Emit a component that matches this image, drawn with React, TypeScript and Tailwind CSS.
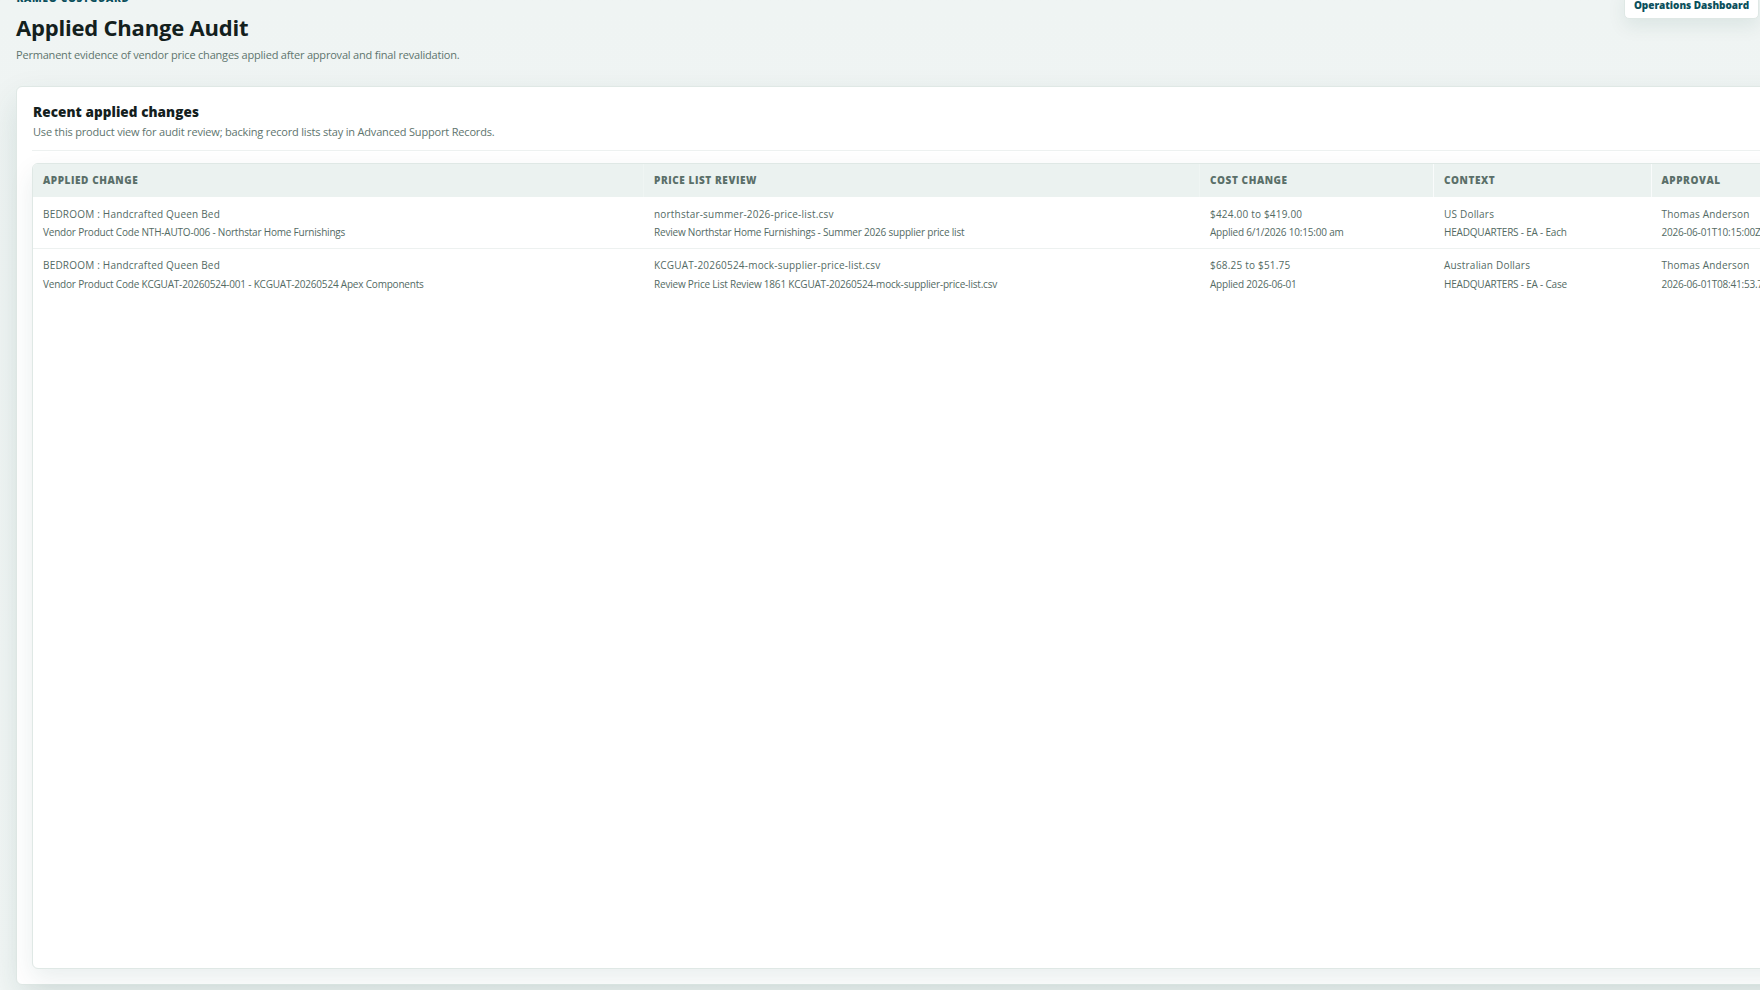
import clsx from 'clsx'

type Row = { cells: [string, string][] }

const COLUMNS = ['Applied Change', 'Price List Review', 'Cost Change', 'Context', 'Approval']

const ROWS: Row[] = [
  {
    cells: [
      ['BEDROOM : Handcrafted Queen Bed', 'Vendor Product Code NTH-AUTO-006 - Northstar Home Furnishings'],
      ['northstar-summer-2026-price-list.csv', 'Review Northstar Home Furnishings - Summer 2026 supplier price list'],
      ['$424.00 to $419.00', 'Applied 6/1/2026 10:15:00 am'],
      ['US Dollars', 'HEADQUARTERS - EA - Each'],
      ['Thomas Anderson', '2026-06-01T10:15:00Z'],
    ],
  },
  {
    cells: [
      ['BEDROOM : Handcrafted Queen Bed', 'Vendor Product Code KCGUAT-20260524-001 - KCGUAT-20260524 Apex Components'],
      ['KCGUAT-20260524-mock-supplier-price-list.csv', 'Review Price List Review 1861 KCGUAT-20260524-mock-supplier-price-list.csv'],
      ['$68.25 to $51.75', 'Applied 2026-06-01'],
      ['Australian Dollars', 'HEADQUARTERS - EA - Case'],
      ['Thomas Anderson', '2026-06-01T08:41:53.7'],
    ],
  },
]

const GRID = 'grid grid-cols-[611px_556px_234px_217.5px_240px]'

export default function App() {
  return (
    <div className="h-[990px] w-[1760px] overflow-hidden bg-linear-to-b from-[#eff4f3] to-[#f3f7f6] pl-[16px] font-['Open_Sans','Noto_Sans',sans-serif]">
      <header className="flex h-[86px] items-start justify-between">
        <div>
          <p className="-mt-[8px] h-[12px] pl-[0.5px] text-[10px] leading-[12px] font-extrabold tracking-[0.72px] text-[#0b4f5c] uppercase">Kameo CostGuard</p>
          <h1 className="mt-[7px] text-[22px] leading-[32px] font-bold tracking-[-0.2px] text-[#13201d]">Applied Change Audit</h1>
          <p className="mt-[4px] text-[11px] leading-[16px] tracking-[-0.2px] text-[#5e746e]">Permanent evidence of vendor price changes applied after approval and final revalidation.</p>
        </div>
        <button className="-mt-[13px] mr-[1px] h-[32px] w-[135px] rounded-[5px] border border-[#dfe8e5] bg-white pt-[5px] text-[10px] font-extrabold tracking-[-0.03px] whitespace-nowrap text-[#0b4f5c] shadow-[0_8px_18px_rgba(16,72,62,0.08)]">
          Operations Dashboard
        </button>
      </header>

      <section className="h-[899px] w-[1800px] rounded-[6px] border border-[#dfe8e5] bg-white px-[15px] pt-[15px] shadow-[0_14px_34px_rgba(16,72,62,0.12)]">
        <div className="h-[49px] border-b border-[#edf1f0] pl-[1px]">
          <h2 className="text-[13.5px] leading-[20px] font-extrabold tracking-[0.08px] text-[#13201d]">Recent applied changes</h2>
          <p className="text-[11px] leading-[20px] tracking-[-0.18px] text-[#5e746e]">Use this product view for audit review; backing record lists stay in Advanced Support Records.</p>
        </div>

        <div className="mt-[12px] h-[806px] overflow-hidden rounded-[6px] border border-[#dfe8e5] bg-white shadow-[0_10px_26px_rgba(16,72,62,0.09)]">
          <div className={clsx(GRID, 'h-[33px] bg-[#ebf2f0]')}>
            {COLUMNS.map((label, i) => (
              <div
                key={label}
                className={clsx(
                  'border-r pl-[10px] text-[10px] leading-[33px] font-extrabold tracking-[0.57px] text-[#5a6f69] uppercase',
                  i < 2 ? 'border-[#eff5f3]' : 'border-[#f9fbfb]',
                )}
              >
                {label}
              </div>
            ))}
          </div>
          {ROWS.map((row, i) => (
            <div key={i} className={clsx(GRID, i === 0 ? 'h-[52px] border-b border-[#edf1f0]' : 'h-[52px]')}>
              {row.cells.map(([title, detail], j) => (
                <div key={j} className={clsx('pl-[10px] whitespace-nowrap text-[#536a64]', i === 0 ? 'pt-[8px]' : 'pt-[7px]')}>
                  <div className={clsx('text-[10px] tracking-[0.2px]', i === 0 ? 'leading-[18px]' : 'h-[19px] leading-[18px]')}>{title}</div>
                  <div className="text-[10px] leading-[18px] tracking-[-0.2px]">{detail}</div>
                </div>
              ))}
            </div>
          ))}
        </div>
      </section>
    </div>
  )
}
